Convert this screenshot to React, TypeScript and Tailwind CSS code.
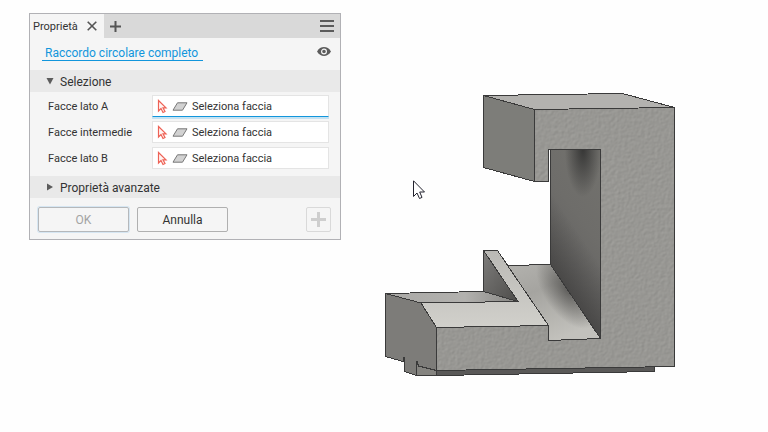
import { useState } from 'react';

const fields = [
    { id: 'face-a', label: 'Facce lato A', active: true },
    { id: 'face-mid', label: 'Facce intermedie', active: false },
    { id: 'face-b', label: 'Facce lato B', active: false }
];

function PickIcon() {
    return (
        <svg className="w-[11px] h-[15px] shrink-0" viewBox="0 0 11 15" fill="none">
            <path d="M1.5 1.5V12L4 9.5L6 13.5L8 12.5L6 8.8H9L1.5 1.5Z" fill="#fff5f3" stroke="#ee6256" strokeWidth="1.2" />
        </svg>
    );
}

function FaceIcon() {
    return (
        <svg className="w-4 h-[9px] shrink-0" viewBox="0 0 16 9" fill="none">
            <path d="M5.5 0.8H15L10.5 8.2H1L5.5 0.8Z" fill="#d2d2d2" stroke="#777" />
        </svg>
    );
}

function SectionHeader({ title, open, onToggle }: { title: string; open: boolean; onToggle: () => void }) {
    return (
        <button
            type="button"
            aria-expanded={open}
            onClick={onToggle}
            className="flex w-full h-[22px] items-center gap-1.5 bg-[#e9e9e9] pl-4 text-left text-[12px] text-[#333]"
        >
            <svg className="w-2 h-2" viewBox="0 0 8 8" fill="#5c5c5c">
                {open ? <path d="M0.5 1H7.5L4 7.5Z" /> : <path d="M1 0.5V7.5L7 4Z" />}
            </svg>
            <span className="pt-px">{title}</span>
        </button>
    );
}

function PropertiesPanel() {
    const [selectionOpen, setSelectionOpen] = useState(true);
    const [advancedOpen, setAdvancedOpen] = useState(false);

    return (
        <section className="w-[312px] shrink-0 self-start border border-[#b1b1b5] bg-[#f5f5f5]">
            {/* Tabs */}
            <header className="flex h-6 items-center bg-[#d9d9d9]">
                <div className="flex h-full w-[74px] items-center justify-between bg-[#f5f5f5] pl-[3px] pr-[7px] text-[11px] text-[#333]">
                    <span className="pt-[2px]">Proprietà</span>
                    <button type="button" aria-label="Chiudi">
                        <svg className="w-[10px] h-[10px]" viewBox="0 0 10 10" stroke="#555" strokeWidth="1.6">
                            <path d="M0.7 0.7L9.3 9.3M9.3 0.7L0.7 9.3" />
                        </svg>
                    </button>
                </div>
                <button type="button" aria-label="Aggiungi scheda" className="ml-1.5">
                    <svg className="w-[11px] h-[11px]" viewBox="0 0 11 11" stroke="#555" strokeWidth="2">
                        <path d="M5.5 0V11M0 5.5H11" />
                    </svg>
                </button>
                <button type="button" aria-label="Menu" className="ml-auto mr-1.5">
                    <svg className="w-[14px] h-3" viewBox="0 0 14 12" fill="#5c5c5c">
                        <path d="M0 0H14V2H0ZM0 5H14V7H0ZM0 10H14V12H0Z" />
                    </svg>
                </button>
            </header>

            {/* Feature name */}
            <div className="flex h-8 items-start justify-between pl-3 pr-[9px] pt-[7px]">
                <a href="#feature" className="h-4 w-[161px] whitespace-nowrap border-b border-[#1296dc] pl-[3px] text-[12px] leading-[17px] text-[#1296dc]">
                    Raccordo circolare completo
                </a>
                <button type="button" aria-label="Anteprima" className="mt-[2px]">
                    <svg className="w-[14px] h-[9px]" viewBox="0 0 14 9">
                        <path d="M0 4.5C3.2-1.4 10.8-1.4 14 4.5C10.8 10.4 3.2 10.4 0 4.5Z" fill="#5c5c5c" />
                        <circle cx="7" cy="4.5" r="2.4" fill="#5c5c5c" stroke="#f5f5f5" strokeWidth="1.2" />
                    </svg>
                </button>
            </div>

            <SectionHeader title="Selezione" open={selectionOpen} onToggle={() => setSelectionOpen(!selectionOpen)} />
            {selectionOpen && (
                <div className="flex flex-col gap-1 pl-[18px] pr-[11px] pt-[3px] pb-[7px] text-[11px] text-[#333]">
                    {fields.map((field) => (
                        <div key={field.id} className="flex h-[22px]">
                            <label htmlFor={field.id} className="w-[104px] leading-6">{field.label}</label>
                            <div
                                className={`flex min-w-0 flex-1 items-center border bg-white pl-1 ${
                                    field.active
                                        ? 'border-[#e4e4e4] border-b-[#1296dc] shadow-[0_2px_0_#c5e2f2]'
                                        : 'border-[#e4e4e4]'
                                }`}
                            >
                                <PickIcon />
                                <span className="w-1" />
                                <FaceIcon />
                                <input
                                    id={field.id}
                                    readOnly
                                    defaultValue="Seleziona faccia"
                                    className="ml-1 min-w-0 flex-1 bg-transparent pt-[3px] outline-none"
                                />
                            </div>
                        </div>
                    ))}
                </div>
            )}

            <SectionHeader title="Proprietà avanzate" open={advancedOpen} onToggle={() => setAdvancedOpen(!advancedOpen)} />

            {/* Actions */}
            <footer className="flex gap-2 pl-2 pr-[9px] pt-[9px] pb-[7px] text-[12px]">
                <button
                    type="button"
                    disabled
                    className="h-[25px] w-[91px] rounded-[2px] border border-[#b5b8bb] text-[#a3a3a3] shadow-[0_0_0_1px_#d6e6f2]"
                >
                    OK
                </button>
                <button type="button" className="h-[25px] w-[91px] rounded-[2px] border border-[#b0b0b0] text-[#333]">
                    Annulla
                </button>
                <button
                    type="button"
                    disabled
                    aria-label="Applica"
                    className="ml-auto flex h-[25px] w-[25px] items-center justify-center rounded-[2px] border border-[#d9d9d9]"
                >
                    <svg className="w-[15px] h-[15px]" viewBox="0 0 15 15" stroke="#cecece" strokeWidth="3">
                        <path d="M7.5 0V15M0 7.5H15" />
                    </svg>
                </button>
            </footer>
        </section>
    );
}

function PartModel() {
    return (
        <svg
            className="ml-[39px] mt-[77px] h-[290px] w-[300px] shrink-0"
            viewBox="380 90 300 290"
            role="img"
            aria-label="Modello"
            stroke="#3a3a3a"
            strokeLinejoin="round"
            shapeRendering="crispEdges"
        >
            <defs>
                <linearGradient id="wall" gradientUnits="userSpaceOnUse" x1="614" y1="180" x2="534" y2="240">
                    <stop offset="0" stopColor="#72716d" />
                    <stop offset="0.5" stopColor="#6e6d6a" />
                    <stop offset="1" stopColor="#636261" />
                </linearGradient>
                {/* dark band along the bottom edge of the wall */}
                <linearGradient id="wallFoot" gradientUnits="userSpaceOnUse" x1="575" y1="301" x2="609" y2="278">
                    <stop offset="0" stopColor="#383736" stopOpacity="0.6" />
                    <stop offset="1" stopColor="#383736" stopOpacity="0" />
                </linearGradient>
                <radialGradient id="wallShade" gradientUnits="userSpaceOnUse" cx="0" cy="0" r="48" gradientTransform="translate(583 149) scale(0.38 1)">
                    <stop offset="0" stopColor="#282828" stopOpacity="0.8" />
                    <stop offset="1" stopColor="#282828" stopOpacity="0" />
                </radialGradient>
                <linearGradient id="slope" x1="0" y1="0" x2="0.5" y2="1">
                    <stop offset="0" stopColor="#b3b2ae" />
                    <stop offset="0.4" stopColor="#a5a4a0" />
                    <stop offset="1" stopColor="#c2c1bc" />
                </linearGradient>
                <radialGradient id="slopeShade" gradientUnits="userSpaceOnUse" cx="0" cy="0" r="44" gradientTransform="translate(568 290) rotate(56) scale(1 0.55)">
                    <stop offset="0" stopColor="#454442" stopOpacity="0.75" />
                    <stop offset="1" stopColor="#454442" stopOpacity="0" />
                </radialGradient>
                <linearGradient id="fin" x1="0" y1="0" x2="1" y2="1">
                    <stop offset="0" stopColor="#7e7d7b" />
                    <stop offset="1" stopColor="#4d4c4a" />
                </linearGradient>
                <linearGradient id="chamfer" x1="0" y1="0" x2="0" y2="1">
                    <stop offset="0" stopColor="#bab9b5" />
                    <stop offset="1" stopColor="#d1d0cb" />
                </linearGradient>
                <linearGradient id="ledge" x1="0" y1="0" x2="1" y2="0">
                    <stop offset="0" stopColor="#aaa9a6" />
                    <stop offset="0.6" stopColor="#b2b1ae" />
                    <stop offset="1" stopColor="#858481" />
                </linearGradient>
                {/* cast metal grain */}
                <filter id="grain" x="0" y="0" width="1" height="1" colorInterpolationFilters="sRGB">
                    <feTurbulence type="fractalNoise" baseFrequency="0.3" numOctaves="2" seed="4" result="noise" />
                    <feDiffuseLighting in="noise" surfaceScale="0.15" lightingColor="#cccbc6" result="lit">
                        <feDistantLight azimuth="225" elevation="48" />
                    </feDiffuseLighting>
                    <feComposite in="lit" in2="SourceGraphic" operator="in" />
                </filter>
            </defs>

            {/* Base rail */}
            <path d="M416.5 361.5L421 365L436.5 369.5L654.5 366V371.5L438 375.5H416.5Z" fill="#5a5958" />
            <path d="M416.5 361.5L418 365L436.5 370.5V375.5H416.5Z" fill="#858480" />

            {/* Lower block */}
            <path d="M385.5 293.5L421 303L436.5 327.5V370.5L418.5 366L417.5 361.5H416.5V375.5L404.5 371.5V357.5H403V361.5L385.5 356.5Z" fill="#7d7c79" />
            <path d="M385.5 293.5L483.5 291.5L518 301.5L421 303Z" fill="url(#ledge)" />
            <path d="M483.5 250.5V291.5L518 301.5Z" fill="url(#fin)" />
            <path d="M483.5 250.5H497.5L548.5 325.5L436.5 327.5L421 303L518 301.5Z" fill="url(#chamfer)" />

            {/* Slot */}
            <path d="M507.5 265.5L550.5 264.5L600.5 338.5L548.5 340.5V325.5Z" fill="url(#slope)" />
            <path d="M507.5 265.5L550.5 264.5L600.5 338.5L548.5 340.5V325.5Z" fill="url(#slopeShade)" stroke="none" />
            <path d="M550.5 149.5H600.5V338.5L550.5 264.5Z" fill="url(#wall)" />
            <path d="M550.5 149.5H600.5V338.5L550.5 264.5Z" fill="url(#wallFoot)" stroke="none" />
            <path d="M550.5 149.5H600.5V338.5L550.5 264.5Z" fill="url(#wallShade)" />

            {/* Upper arm */}
            <path d="M483.5 95.5L622.5 93.5L674.5 107.5L534.5 109.5Z" fill="#b3b2af" />
            <path d="M483.5 95.5L534.5 109.5V181.5L483.5 167.5Z" fill="#7d7d79" />

            {/* Front face */}
            <path
                d="M534.5 109.5L674.5 107.5V366.5L436.5 370.5V327.5L548.5 325.5V340.5L600.5 338.5V149.5H548.5V181.5H534.5Z"
                fill="#969592"
                stroke="none"
                filter="url(#grain)"
            />
            <path d="M534.5 109.5L674.5 107.5V366.5L436.5 370.5V327.5L548.5 325.5V340.5L600.5 338.5V149.5H548.5V181.5H534.5Z" fill="none" />
        </svg>
    );
}

export default function App() {
    return (
        <main className="relative flex min-h-screen overflow-hidden bg-[#fefefe] pl-[29px] pt-[13px] font-[Roboto,sans-serif]">
            <PropertiesPanel />
            <PartModel />
            {/* Mouse pointer */}
            <svg className="absolute left-[413px] top-[180px] h-5 w-3" viewBox="0 0 12 20">
                <path d="M0.5 0.8V16.5L4 13L6.5 18.5L9 17.4L6.7 12H11.5Z" fill="#fff" stroke="#23232e" />
            </svg>
        </main>
    );
}
